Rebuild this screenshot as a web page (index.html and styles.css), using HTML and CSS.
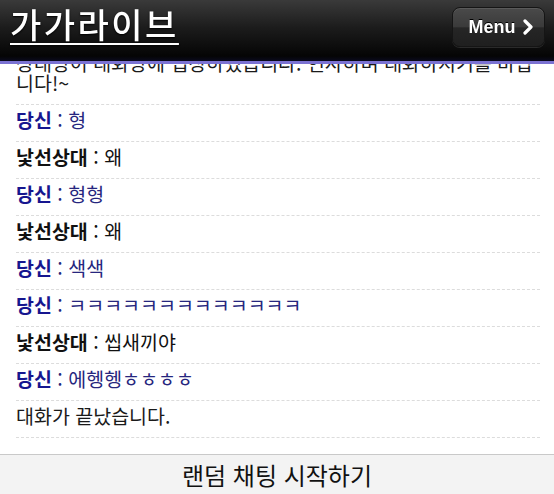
FILE: index.html
```html
<!DOCTYPE html>
<html lang="ko">
<head>
<meta charset="utf-8">
<title>가가라이브</title>
<link rel="stylesheet" href="styles.css">
</head>
<body>
<header class="topbar">
  <h1 class="logo"><a href="#">가가라이브</a></h1>
  <a class="menu-btn" href="#">Menu<svg class="chev" width="10" height="16" viewBox="0 0 10 16"><polyline points="2,2 8,8 2,14" fill="none" stroke="#fff" stroke-width="3.2" stroke-linecap="round" stroke-linejoin="round"/></svg></a>
</header>
<main class="chat">
  <ul class="log">
    <li class="msg sys">상대방이 대화방에 입장하였습니다. 인사하며 대화하시기를 바랍니다!~</li>
    <li class="msg me"><b class="who">당신</b> : 형</li>
    <li class="msg other"><b class="who">낯선상대</b> : 왜</li>
    <li class="msg me"><b class="who">당신</b> : 형형</li>
    <li class="msg other"><b class="who">낯선상대</b> : 왜</li>
    <li class="msg me"><b class="who">당신</b> : 색색</li>
    <li class="msg me"><b class="who">당신</b> : ㅋㅋㅋㅋㅋㅋㅋㅋㅋㅋㅋㅋㅋ</li>
    <li class="msg other"><b class="who">낯선상대</b> : 씹새끼야</li>
    <li class="msg me"><b class="who">당신</b> : 에헹헹ㅎㅎㅎㅎ</li>
    <li class="msg sys">대화가 끝났습니다.</li>
  </ul>
</main>
<footer class="bottombar">
  <button class="start-btn" type="button">랜덤 채팅 시작하기</button>
</footer>
</body>
</html>
```
FILE: styles.css
```css
* { box-sizing: border-box; }
html, body { margin: 0; padding: 0; }
body {
  height: 100vh;
  display: flex;
  flex-direction: column;
  font-family: "Noto Sans CJK KR", "Noto Sans", sans-serif;
  background: #fff;
  color: #111;
  overflow: hidden;
}

.topbar {
  position: fixed;
  top: 0; left: 0; right: 0;
  height: 64px;
  display: flex;
  justify-content: space-between;
  align-items: flex-start;
  padding: 7px 9px 0 10px;
  background: linear-gradient(#3a3a3a 0%, #1c1c1c 45%, #050505 92%, #0a0a1e 100%);
  border-bottom: 3px solid #7b72d2;
  z-index: 2;
}
.logo {
  margin: 0;
  font-size: 34px;
  font-weight: 500;
  line-height: 34px;
  letter-spacing: 2.5px;
}
.logo a {
  color: #fff;
  text-decoration: underline;
  text-decoration-thickness: 2px;
  text-underline-offset: 5px;
  text-shadow: 0 1px 2px #000;
}
.menu-btn {
  width: 93px;
  height: 40px;
  display: flex;
  align-items: center;
  justify-content: center;
  gap: 7px;
  padding-left: 4px;
  border-radius: 8px;
  border: 1px solid #151515;
  box-shadow: inset 0 1px 0 #5a5a5a, 0 1px 0 #2a2a2a;
  background: linear-gradient(#4a4a4a 0%, #3a3a3a 50%, #262626 52%, #1f1f1f 100%);
  color: #fff;
  font-family: "Liberation Sans", Arial, sans-serif;
  font-weight: bold;
  font-size: 18px;
  text-decoration: none;
  text-shadow: 0 -1px 0 #000;
}
.chev { display: block; }

.chat {
  flex: 1;
  overflow: hidden;
  padding: 48px 14px 0 16px;
}
.log {
  list-style: none;
  margin: 0;
  padding: 0;
}
.msg {
  font-size: 19.5px;
  line-height: 20px;
  padding: 5px 0 11px;
  border-bottom: 1px dashed #dcdcdc;
}
.msg .who { font-weight: bold; }
.me { color: #26267e; }
.me .who { color: #16168f; }
.other { color: #111; }
.sys { color: #1a1a1a; }

.bottombar {
  height: 40px;
  border-top: 1px solid #c9c9c9;
  background: #f3f3f3;
  display: flex;
}
.start-btn {
  flex: 1;
  border: 0;
  background: transparent;
  font-family: "Noto Sans CJK KR", sans-serif;
  font-size: 24px;
  line-height: 38px;
  color: #111;
  padding: 0;
}
```
